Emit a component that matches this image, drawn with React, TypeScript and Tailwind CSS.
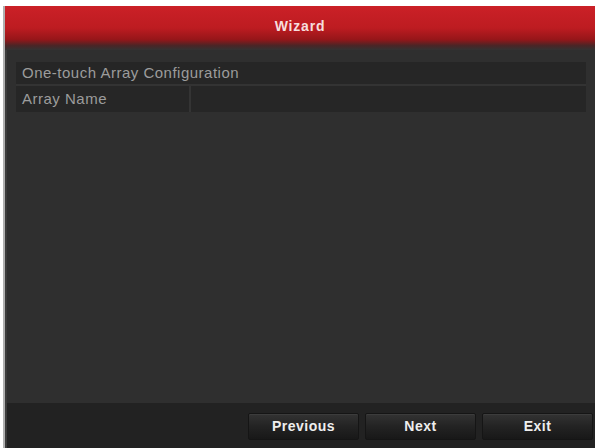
import * as React from "react";

const font = { fontFamily: '"Liberation Sans", Arial, sans-serif' };

function WizButton({ label }: { label: string }) {
  return (
    <button
      type="button"
      className="h-[27px] w-[111px] rounded-[2px] border border-[#151515] bg-gradient-to-b from-[#333333] via-[#232323] to-[#181818] text-[14px] font-bold tracking-[0.5px] text-[#eeeeee] shadow-[inset_0_1px_0_#3c3c3c]"
    >
      {label}
    </button>
  );
}

export default function App() {
  return (
    <div className="h-[448px] w-[598px] bg-white pl-[3px] pr-[3px] pt-[6px]" style={font}>
      <div className="flex h-full flex-col border-l-2 border-[#b0b0b0] bg-[#2f2f2f]">
        {/* header */}
        <div className="flex h-[44px] items-center justify-center bg-[linear-gradient(to_bottom,#cb2027_0%,#bd1c21_50%,#961619_76%,#4a2526_90%,#333333_100%)] pb-[4px]">
          <span className="text-[14px] font-bold tracking-[0.8px] text-[#f6dede]">Wizard</span>
        </div>

        {/* body */}
        <div className="flex flex-1 flex-col border-l-2 border-[#3c3c3c] px-[9px] pt-[12px]">
          <div className="flex flex-col gap-[2px] rounded-[2px] bg-[#333333]">
            <div className="flex h-[22px] items-center bg-[#262626] pl-[6px] text-[15px] tracking-[0.5px] text-[#9c9c9c]">
              One-touch Array Configuration
            </div>
            <div className="flex h-[26px] bg-[#262626] text-[15px] tracking-[0.5px] text-[#9c9c9c]">
              <div className="flex w-[175px] items-center border-r-2 border-[#343434] pl-[6px]">Array Name</div>
              <div className="flex-1" />
            </div>
          </div>
        </div>

        {/* footer */}
        <div className="flex h-[45px] items-start justify-end gap-[6px] border-l-2 border-[#3c3c3c] bg-[#222222] pr-[2px] pt-[10px]">
          <WizButton label="Previous" />
          <WizButton label="Next" />
          <WizButton label="Exit" />
        </div>
      </div>
    </div>
  );
}
